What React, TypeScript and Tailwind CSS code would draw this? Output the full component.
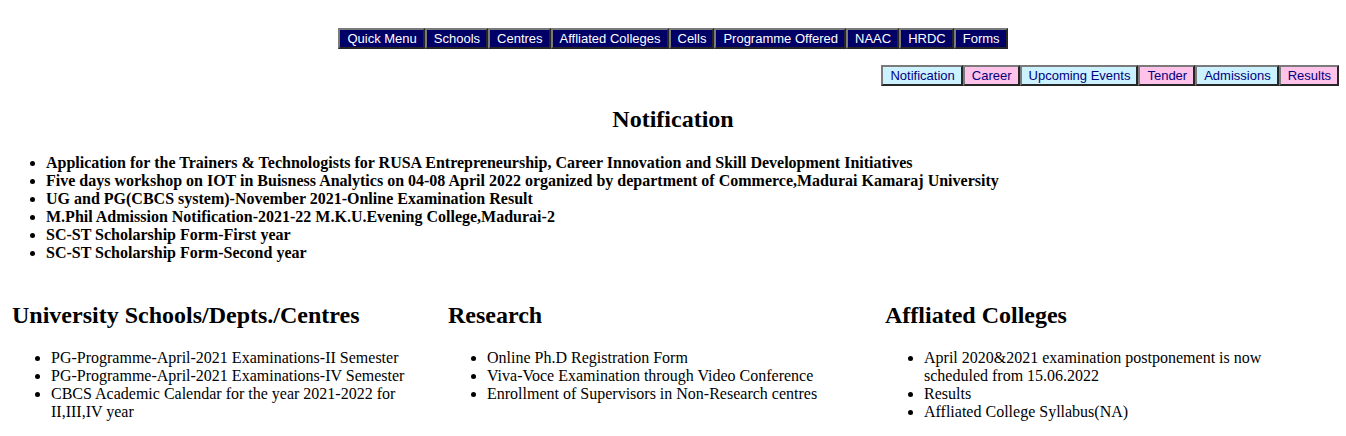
import React from "react";

const nav1 = ["Quick Menu", "Schools", "Centres", "Affliated Colleges", "Cells", "Programme Offered", "NAAC", "HRDC", "Forms"];
const nav2: [string, boolean][] = [
  ["Notification", true],
  ["Career", false],
  ["Upcoming Events", true],
  ["Tender", false],
  ["Admissions", true],
  ["Results", false],
];

const notes = [
  "Application for the Trainers & Technologists for RUSA Entrepreneurship, Career Innovation and Skill Development Initiatives",
  "Five days workshop on IOT in Buisness Analytics on 04-08 April 2022 organized by department of Commerce,Madurai Kamaraj University",
  "UG and PG(CBCS system)-November 2021-Online Examination Result",
  "M.Phil Admission Notification-2021-22 M.K.U.Evening College,Madurai-2",
  "SC-ST Scholarship Form-First year",
  "SC-ST Scholarship Form-Second year",
];

const cols: [string, string[]][] = [
  [
    "University Schools/Depts./Centres",
    [
      "PG-Programme-April-2021 Examinations-II Semester",
      "PG-Programme-April-2021 Examinations-IV Semester",
      "CBCS Academic Calendar for the year 2021-2022 for II,III,IV year",
    ],
  ],
  [
    "Research",
    [
      "Online Ph.D Registration Form",
      "Viva-Voce Examination through Video Conference",
      "Enrollment of Supervisors in Non-Research centres",
    ],
  ],
  [
    "Affliated Colleges",
    [
      "April 2020&2021 examination postponement is now scheduled from 15.06.2022",
      "Results",
      "Affliated College Syllabus(NA)",
    ],
  ],
];

export default function App() {
  return (
    <div className="w-[1346px] h-[436px] overflow-hidden bg-white text-black font-['Liberation_Serif','Times_New_Roman',serif] pt-[28px]">
      <div className="flex justify-center">
        <div className="flex bg-[#000066] font-['Liberation_Sans',Arial,sans-serif] text-[13px] leading-[15px] text-white">
          {nav1.map((t) => (
            <div
              key={t}
              className="border-2 border-t-[#7a7a7a] border-l-[#7a7a7a] border-b-[#262626] border-r-[#262626] pl-[7px] pr-[6px] py-[1px]"
            >
              {t}
            </div>
          ))}
        </div>
      </div>
      <div className="flex justify-end pr-[7px] mt-[16px]">
        <div className="flex font-['Liberation_Sans',Arial,sans-serif] text-[13px] leading-[15px] text-[#000080]">
          {nav2.map(([t, cyan]) => (
            <div
              key={t}
              className={
                "border-2 border-t-[#7a7a7a] border-l-[#7a7a7a] border-b-[#262626] border-r-[#262626] pl-[7px] pr-[6px] py-[1px] " +
                (cyan ? "bg-[#ccf2ff]" : "bg-[#ffc2e8]")
              }
            >
              {t}
            </div>
          ))}
        </div>
      </div>
      <h2 className="mt-[19px] text-center text-[24px] leading-[28px] font-bold">Notification</h2>
      <ul className="mt-[21px] list-disc pl-[46px] text-[16px] leading-[18px] font-bold">
        {notes.map((n) => (
          <li key={n}>{n}</li>
        ))}
      </ul>
      <div className="mt-[39px] ml-[12px] grid grid-cols-[436px_437px_437px]">
        {cols.map(([h, items]) => (
          <div key={h} className="pr-[20px]">
            <h2 className="text-[24px] leading-[28px] font-bold">{h}</h2>
            <ul className="mt-[20px] list-disc pl-[39px] text-[16px] leading-[18px]">
              {items.map((i) => (
                <li key={i}>{i}</li>
              ))}
            </ul>
          </div>
        ))}
      </div>
    </div>
  );
}
